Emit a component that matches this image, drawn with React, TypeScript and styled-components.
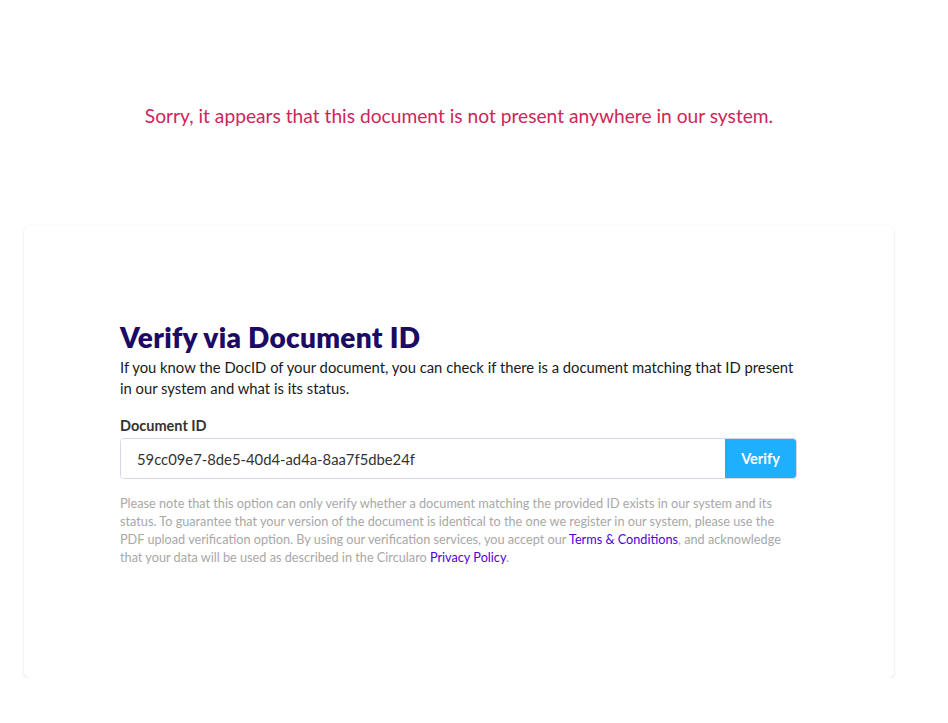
import React, { useState } from 'react';
import styled, { createGlobalStyle } from 'styled-components';

const GlobalStyle = createGlobalStyle`
  html, body {
    margin: 0;
    padding: 0;
    background: #ffffff;
  }
  body {
    font-family: Lato, "Open Sans", "Liberation Sans", sans-serif;
  }
`;

const Page = styled.div`
  width: 870px;
  margin-left: 24px;
  padding-top: 103px;
`;

const ErrorMessage = styled.p`
  margin: 0;
  text-align: center;
  color: #d0245a;
  font-size: 19.2px;
  line-height: 26px;
`;

const Card = styled.section`
  margin-top: 97px;
  background: #fff;
  border-radius: 6px;
  box-shadow: 0 1px 3px rgba(0, 0, 0, 0.13);
  padding: 95px 97px 112px 96px;
`;

const Title = styled.h2`
  margin: 0;
  color: #1c0a63;
  font-size: 28px;
  line-height: 32px;
  font-weight: 800;
  letter-spacing: 0.3px;
`;

const Lead = styled.p`
  margin: 4px 0 0;
  color: #1a1a1a;
  font-size: 14.8px;
  line-height: 21px;
`;

const Label = styled.label`
  display: block;
  margin-top: 17px;
  color: #333;
  font-size: 14.5px;
  font-weight: 700;
  line-height: 20px;
`;

const InputGroup = styled.div`
  display: flex;
  margin-top: 2px;
  height: 39px;
  border: 1px solid #d9d6e6;
  border-radius: 4px;
  overflow: hidden;
`;

const Input = styled.input`
  flex: 1;
  min-width: 0;
  border: none;
  outline: none;
  padding: 0 16px;
  font-family: inherit;
  font-size: 14.8px;
  color: #333;
`;

const VerifyButton = styled.button`
  width: 71px;
  border: none;
  background: #1fafff;
  color: #fff;
  font-family: inherit;
  font-weight: 700;
  font-size: 14.5px;
  cursor: pointer;
`;

const Note = styled.p`
  margin: 15px 0 0;
  color: #a8a8a8;
  font-size: 12.7px;
  line-height: 18px;
`;

const Link = styled.a`
  color: #5200e0;
  text-decoration: none;
`;

export default function App() {
  const [docId, setDocId] = useState('59cc09e7-8de5-40d4-ad4a-8aa7f5dbe24f');

  return (
    <>
      <GlobalStyle />
      <Page>
        <ErrorMessage>Sorry, it appears that this document is not present anywhere in our system.</ErrorMessage>
        <Card>
          <Title>Verify via Document ID</Title>
          <Lead>
            If you know the DocID of your document, you can check if there is a document matching that ID present
            in our system and what is its status.
          </Lead>
          <Label htmlFor="docid">Document ID</Label>
          <InputGroup>
            <Input id="docid" value={docId} onChange={(e) => setDocId(e.target.value)} />
            <VerifyButton>Verify</VerifyButton>
          </InputGroup>
          <Note>
            Please note that this option can only verify whether a document matching the provided ID exists in our
            system and its status. To guarantee that your version of the document is identical to the one we register
            in our system, please use the PDF upload verification option. By using our verification services, you
            accept our <Link href="#">Terms &amp; Conditions</Link>, and acknowledge that your data will be used as
            described in the Circularo <Link href="#">Privacy Policy</Link>.
          </Note>
        </Card>
      </Page>
    </>
  );
}
